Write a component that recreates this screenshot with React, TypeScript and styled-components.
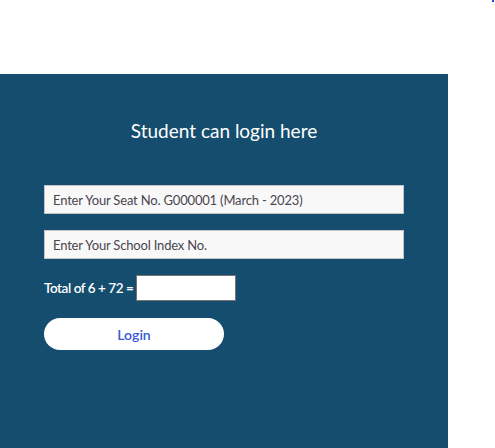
import React from "react";
import styled, { createGlobalStyle } from "styled-components";

const Global = createGlobalStyle`
  html, body { margin: 0; padding: 0; background: #ffffff; }
  body { font-family: "Source Sans Pro", Lato, "Noto Sans", sans-serif; }
  * { box-sizing: border-box; }
`;

const Page = styled.div`
  position: relative;
  width: 495px;
  height: 448px;
  padding-top: 74px;
  background: #ffffff;
`;

const Dot = styled.span`
  position: absolute;
  top: 0;
  right: 1px;
  width: 2px;
  height: 2px;
  background: #2a3cf0;
`;

const Panel = styled.section`
  width: 448px;
  height: 374px;
  background: #154d6e;
  padding: 44px 44px 0 44px;
  display: flex;
  flex-direction: column;
`;

const Title = styled.h2`
  margin: 0 0 41px 0;
  font-family: Lato, "Noto Sans", sans-serif;
  font-weight: 400;
  font-size: 19px;
  line-height: 26px;
  color: #ffffff;
  text-align: center;
`;

const Field = styled.input`
  width: 360px;
  height: 29px;
  margin: 0 0 16px 0;
  padding: 0 8px;
  background: #f8f8f8;
  border: 1px solid #c4c4c4;
  font-family: Lato, "Noto Sans", sans-serif;
  font-size: 13px;
  letter-spacing: -0.18px;
  color: #444;
  outline: none;
  &::placeholder { color: #4a4550; }
`;

const CaptchaRow = styled.label`
  display: flex;
  align-items: center;
  gap: 3px;
  margin: 0 0 17px 0;
  font-family: Lato, "Noto Sans", sans-serif;
  font-size: 13.5px;
  font-weight: 600;
  color: #ffffff;
  letter-spacing: -0.45px;
`;

const CaptchaInput = styled.input`
  width: 100px;
  height: 26px;
  background: #ffffff;
  border: 1px solid #757575;
  outline: none;
`;

const LoginButton = styled.button`
  width: 180px;
  height: 32px;
  border: none;
  border-radius: 16px;
  background: #ffffff;
  color: #3558d4;
  font-family: Lato, "Noto Sans", sans-serif;
  font-size: 14px;
  font-weight: 600;
  cursor: pointer;
`;

export default function App() {
  return (
    <>
      <Global />
      <Page>
        <Dot />
        <Panel>
          <Title>Student can login here</Title>
          <Field placeholder="Enter Your Seat No. G000001 (March - 2023)" />
          <Field placeholder="Enter Your School Index No." />
          <CaptchaRow>
            Total of 6 + 72 =
            <CaptchaInput />
          </CaptchaRow>
          <LoginButton>Login</LoginButton>
        </Panel>
      </Page>
    </>
  );
}
